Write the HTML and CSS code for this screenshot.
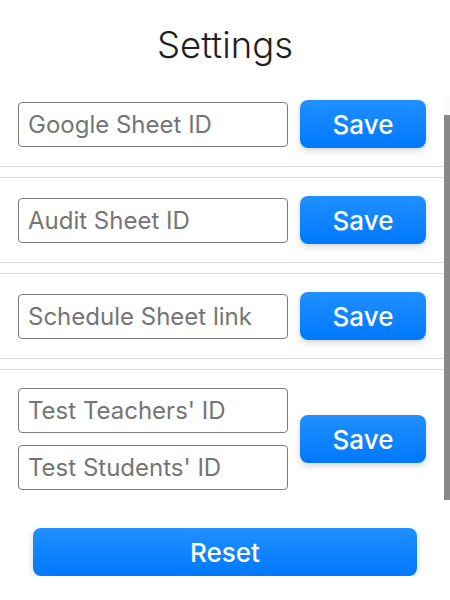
FILE: index.html
```html
<!DOCTYPE html>
<html lang="en">
<head>
<meta charset="utf-8">
<title>Settings</title>
<link rel="stylesheet" href="styles.css">
</head>
<body>
<h1 class="title">Settings</h1>
<div class="panel">
  <div class="scroll" id="scroll">
    <div class="section">
      <div class="row">
        <input class="field" type="text" placeholder="Google Sheet ID">
        <button class="btn save">Save</button>
      </div>
    </div>
    <div class="section">
      <div class="row">
        <input class="field" type="text" placeholder="Audit Sheet ID">
        <button class="btn save">Save</button>
      </div>
    </div>
    <div class="section">
      <div class="row">
        <input class="field" type="text" placeholder="Schedule Sheet link">
        <button class="btn save">Save</button>
      </div>
    </div>
    <div class="section">
      <div class="row">
        <div class="fields">
          <input class="field" type="text" placeholder="Test Teachers' ID">
          <input class="field" type="text" placeholder="Test Students' ID">
        </div>
        <button class="btn save">Save</button>
      </div>
    </div>
  </div>
  <div class="track"><div class="thumb"></div></div>
</div>
<button class="btn reset">Reset</button>
<script src="script.js"></script>
</body>
</html>
```

FILE: styles.css
```css
html, body {
  margin: 0;
  padding: 0;
  background: #ffffff;
}
body {
  font-family: Inter, "Noto Sans", sans-serif;
  width: 450px;
}
.title {
  margin: 0;
  padding-top: 23px;
  font-size: 36.5px;
  line-height: 44px;
  font-weight: 300;
  color: #1f1f24;
  text-align: center;
}
.panel {
  margin-top: 30px;
  height: 406px;
  display: flex;
}
.scroll {
  width: 444px;
  height: 100%;
  overflow-y: auto;
  scrollbar-width: none;
}
.scroll::-webkit-scrollbar {
  display: none;
}
.track {
  width: 6px;
  height: 100%;
  box-sizing: border-box;
  padding-top: 18px;
  background: #fbfbfb;
}
.thumb {
  height: 385px;
  background: #888888;
}
.section {
  padding: 18px;
  border-top: 1px solid #dddddd;
  border-bottom: 1px solid #dddddd;
  margin-bottom: 10px;
}
.section:last-child {
  margin-bottom: 0;
}
.row {
  display: flex;
  align-items: center;
  gap: 12px;
}
.fields {
  display: flex;
  flex-direction: column;
  gap: 12px;
}
.field {
  box-sizing: border-box;
  width: 270px;
  height: 45px;
  margin: 0;
  padding: 0 9px;
  border: 1px solid #7d7d7d;
  border-radius: 4px;
  font-family: Inter, "Noto Sans", sans-serif;
  font-size: 24px;
  color: #333;
  background: #fff;
  outline: none;
}
.field::placeholder {
  color: #757575;
}
.btn {
  box-sizing: border-box;
  height: 48px;
  border: none;
  border-radius: 8px;
  background: linear-gradient(to bottom, #2190ff, #0078ff);
  box-shadow: 0 3px 7px rgba(0, 0, 0, 0.16);
  color: #ffffff;
  font-family: Inter, "Noto Sans", sans-serif;
  font-size: 26px;
  font-weight: 500;
  padding: 0;
  cursor: pointer;
}
.save {
  width: 126px;
  flex: none;
}
.reset {
  display: block;
  width: 384px;
  margin: 25px auto 0;
}
```

FILE: script.js
```js
document.getElementById('scroll').scrollTop = 16;
```
